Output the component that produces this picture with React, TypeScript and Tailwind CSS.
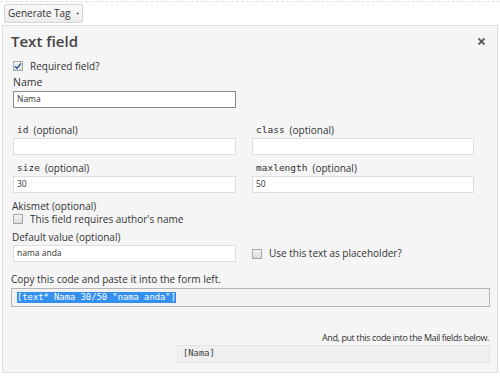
import { useState } from 'react'

const sans = { fontFamily: '"Open Sans", "Noto Sans", sans-serif' }
const mono = { fontFamily: '"DejaVu Sans Mono", "Liberation Mono", monospace' }

function Check({ checked }: { checked?: boolean }) {
  return (
    <span className="flex h-[10px] w-[10px] shrink-0 items-center justify-center border border-[#a8a8a8] bg-gradient-to-b from-[#f4f4f4] to-[#dcdcdc]">
      {checked && (
        <svg width="8" height="8" viewBox="0 0 8 8">
          <path d="M1 4.2 L3 6.4 L7 1.2" fill="none" stroke="#2d5fa8" strokeWidth="1.5" />
        </svg>
      )}
    </span>
  )
}

function Field({ value, dark }: { value?: string; dark?: boolean }) {
  return (
    <div
      className={`flex h-[17px] items-center bg-white px-[3px] text-[8.5px] text-[#333] ${
        dark ? 'border border-[#8a8a8a]' : 'border border-[#dedede]'
      }`}
    >
      {value}
    </div>
  )
}

function OptLabel({ code }: { code: string }) {
  return (
    <div className="flex h-[14px] items-center pl-[4px] text-[10px] text-[#333]">
      <span style={mono} className="text-[9.5px]">
        {code}
      </span>
      <span className="ml-[5px]">(optional)</span>
    </div>
  )
}

export default function App() {
  const [open] = useState(true)

  return (
    <div style={sans} className="h-[380px] w-[500px] overflow-hidden bg-white text-[#333]">
      <div className="mt-[1px] border-t border-dashed border-[#e2e2e2]" />
      <button
        type="button"
        className="ml-[4px] mt-[2px] flex h-[19px] w-[79px] items-center gap-[5px] whitespace-nowrap rounded-[2px] border border-[#d4d4d4] bg-gradient-to-b from-[#fafafa] to-[#ececec] px-[3px] text-[10px] text-[#333]"
      >
        Generate Tag
        <svg width="6" height="4" viewBox="0 0 6 4">
          <path d="M0 0 H6 L3 3.5 Z" fill="#666" />
        </svg>
      </button>

      {open && (
        <div className="ml-[2px] mt-[2px] w-[496px] border border-[#dddddd] bg-[#f5f5f5] px-[8px] pb-[9px] pt-[4px]">
          <div className="flex h-[22px] items-center justify-between">
            <h2 className="text-[15px] font-semibold leading-[22px] text-[#444]">Text field</h2>
            <svg width="7" height="7" viewBox="0 0 7 7" className="mr-[4px]">
              <path d="M0.5 0.5 L6.5 6.5 M6.5 0.5 L0.5 6.5" stroke="#555" strokeWidth="1.8" />
            </svg>
          </div>

          <div className="ml-[2px]">
            <div className="mt-[8px] flex h-[12px] items-center gap-[7px] text-[10px]">
              <Check checked />
              Required field?
            </div>

            <div className="mt-[4px] flex h-[14px] items-center text-[10.5px]">Name</div>
            <div className="mt-[1px] w-[223px]">
              <Field value="Nama" dark />
            </div>

            <div className="mt-[15px] grid grid-cols-[223px_222px] gap-x-[16px]">
              <div>
                <OptLabel code="id" />
                <div className="mt-[1px]">
                  <Field />
                </div>
              </div>
              <div>
                <OptLabel code="class" />
                <div className="mt-[1px]">
                  <Field />
                </div>
              </div>
            </div>

            <div className="mt-[6px] grid grid-cols-[223px_222px] gap-x-[16px]">
              <div>
                <OptLabel code="size" />
                <div className="mt-[1px]">
                  <Field value="30" />
                </div>
              </div>
              <div>
                <OptLabel code="maxlength" />
                <div className="mt-[1px]">
                  <Field value="50" />
                </div>
              </div>
            </div>

            <div className="-ml-[1px] mt-[6px] flex h-[14px] items-center text-[10px]">Akismet (optional)</div>
            <div className="flex h-[12px] items-center gap-[7px] text-[10px]">
              <Check />
              This field requires author's name
            </div>

            <div className="-ml-[1px] mt-[5px] flex h-[14px] items-center text-[10px]">Default value (optional)</div>
            <div className="mt-[1px] grid grid-cols-[223px_222px] items-center gap-x-[16px]">
              <Field value="nama anda" />
              <div className="flex items-center gap-[7px] text-[10px]">
                <Check />
                Use this text as placeholder?
              </div>
            </div>
          </div>

          <div className="mt-[10px] flex h-[14px] items-center text-[10px]">
            Copy this code and paste it into the form left.
          </div>
          <div className="mt-[2px] flex h-[19px] w-[479px] items-center border border-[#b5b5b5] bg-[#f2f2f2] px-[5px]">
            <span style={mono} className="bg-[#3390f0] text-[8.8px] leading-[11px] text-white">
              [text* Nama 30/50 "nama anda"]
            </span>
          </div>

          <div className="mt-[24px] flex h-[14px] w-[479px] items-center justify-end pr-[1px] text-[9px] tracking-[-0.4px]">
            And, put this code into the Mail fields below.
          </div>
          <div className="ml-[166px] flex h-[18px] w-[313px] items-center border border-[#e3e3e3] bg-[#efefef] px-[5px]">
            <span style={mono} className="text-[8.8px] text-[#444]">
              [Nama]
            </span>
          </div>
        </div>
      )}
    </div>
  )
}
